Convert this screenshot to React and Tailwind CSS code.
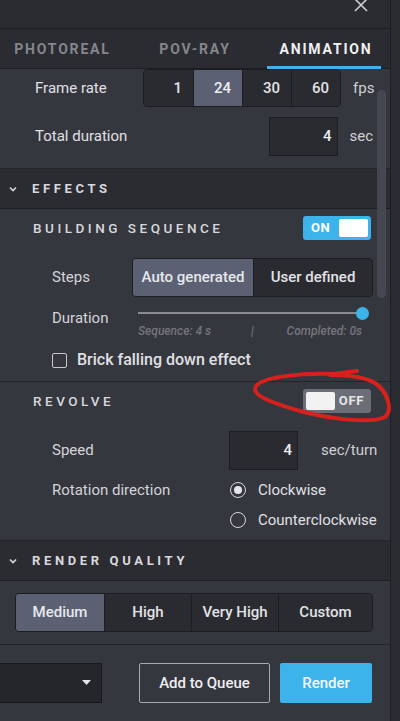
import React, { useState } from "react";

const Segmented = ({ items, active, widths, className }) => (
  <div className={`flex rounded-[4px] border border-[#1c1d22] overflow-hidden ${className}`}>
    {items.map((item, i) => (
      <div
        key={item}
        className={`flex items-center justify-center text-[15px] font-medium ${
          i === active ? "bg-[#5b6073] text-[#e8e8ec]" : "bg-[#2a2b31] text-[#e2e2e6]"
        } ${i > 0 ? "border-l border-[#1c1d22]" : ""}`}
        style={{ width: widths[i] }}
      >
        {item}
      </div>
    ))}
  </div>
);

const Toggle = ({ on }) =>
  on ? (
    <div className="w-[68px] h-[24px] rounded-[3px] bg-[#3db3ec] flex items-center justify-between pl-[8px] pr-[3px]">
      <span className="text-[13px] font-bold text-white tracking-[0.05em]">ON</span>
      <div className="w-[29px] h-[18px] bg-white rounded-[2px]" />
    </div>
  ) : (
    <div className="w-[68px] h-[24px] rounded-[3px] bg-[#6c6e77] flex items-center justify-between pl-[3px] pr-[7px]">
      <div className="w-[29px] h-[18px] bg-[#f2f2f2] rounded-[2px]" />
      <span className="text-[13px] font-bold text-[#e6e6e6] tracking-[0.05em]">OFF</span>
    </div>
  );

const Chevron = () => (
  <svg width="10" height="10" viewBox="0 0 10 10" className="mr-[14px]">
    <path d="M2 3.5 L5 6.5 L8 3.5" stroke="#d8d8dc" strokeWidth="1.6" fill="none" />
  </svg>
);

const App = () => {
  const [tab] = useState(2);
  const tabs = ["PHOTOREAL", "POV-RAY", "ANIMATION"];

  return (
    <div
      className="relative w-[400px] h-[721px] overflow-hidden flex bg-[#2a2c31] text-[#dcdce0]"
      style={{ fontFamily: "Roboto, 'Noto Sans', sans-serif" }}
    >
      <div className="w-[391px] h-full flex flex-col bg-[#35373f] border-r border-[#1d1e22]">
        {/* title bar */}
        <div className="h-[29px] bg-[#2b2c32] border-b border-[#1d1e22] flex items-start justify-end pr-[22px]">
          <svg width="14" height="14" viewBox="0 0 14 14" className="mt-[-2px]">
            <path d="M1 1 L13 13 M13 1 L1 13" stroke="#d0d0d4" strokeWidth="1.6" />
          </svg>
        </div>

        {/* tabs */}
        <div className="h-[40px] bg-[#2b2c32] border-b border-[#1d1e22] flex">
          {tabs.map((t, i) => (
            <div key={t} className="relative flex-1 flex items-center justify-center">
              <span
                className={`text-[14px] font-bold tracking-[0.13em] mt-[2px] ${
                  i === tab ? "text-[#f0f0f2]" : "text-[#85868c]"
                } ${i === 0 ? "ml-[-5px]" : ""} ${i === 2 ? "ml-[2px]" : ""}`}
              >
                {t}
              </span>
              {i === tab && (
                <div className="absolute bottom-[-1px] left-[7px] right-[9px] h-[3px] bg-[#3db3ec]" />
              )}
            </div>
          ))}
        </div>

        {/* frame rate + duration */}
        <div className="h-[100px] border-b border-[#24252a] flex flex-col">
          <div className="flex items-center h-[38px]">
            <span className="ml-[35px] w-[108px] text-[15px] text-[#e0e0e4]">Frame rate</span>
            <div className="flex rounded-[4px] border border-[#1c1d22] overflow-hidden h-[38px]">
              {["1", "24", "30", "60"].map((v, i) => (
                <div
                  key={v}
                  className={`w-[49px] flex items-center justify-end pr-[11px] text-[15px] font-medium ${
                    i === 1 ? "bg-[#5b6073] text-[#eeeef0]" : "bg-[#2a2b31] text-[#e2e2e6]"
                  } ${i > 0 ? "border-l border-[#1c1d22]" : ""}`}
                >
                  {v}
                </div>
              ))}
            </div>
            <span className="ml-[12px] text-[15px] text-[#d0d0d4]">fps</span>
          </div>
          <div className="flex items-center h-[39px] mt-[10px]">
            <span className="ml-[35px] flex-1 text-[15px] text-[#e0e0e4]">Total duration</span>
            <div className="w-[69px] h-[39px] bg-[#2a2b31] border border-[#1c1d22] flex items-center justify-end pr-[6px] text-[15px] font-medium text-[#eeeef0]">
              4
            </div>
            <span className="ml-[11px] mr-[17px] text-[15px] text-[#d0d0d4]">sec</span>
          </div>
        </div>

        {/* effects header */}
        <div className="h-[40px] bg-[#2b2c32] border-b border-[#1d1e22] flex items-center pl-[8px]">
          <Chevron />
          <span className="text-[13px] font-bold tracking-[0.28em] text-[#d8d8dc]">EFFECTS</span>
        </div>

        {/* building sequence */}
        <div className="h-[173px] border-b border-[#24252a] flex flex-col">
          <div className="flex items-center justify-between h-[24px] mt-[7px] pl-[33px] pr-[19px]">
            <span className="text-[13.5px] font-medium tracking-[0.26em] text-[#d8d8dc]">BUILDING SEQUENCE</span>
            <Toggle on />
          </div>
          <div className="flex items-center h-[39px] mt-[18px]">
            <span className="ml-[52px] w-[80px] text-[15px] text-[#d4d4d8]">Steps</span>
            <Segmented
              items={["Auto generated", "User defined"]}
              active={0}
              widths={[120, 119]}
              className="h-[39px]"
            />
          </div>
          <div className="flex items-start mt-[9px]">
            <span className="ml-[52px] w-[86px] text-[15px] text-[#d4d4d8] mt-[1px]">Duration</span>
            <div className="w-[230px] flex flex-col">
              <div className="relative h-[14px] flex items-center">
                <div className="w-[224px] h-[2px] bg-[#8a8b90]" />
                <div className="absolute left-[218px] top-[1px] w-[13px] h-[13px] rounded-full bg-[#3db3ec]" />
              </div>
              <div className="flex items-center text-[12px] font-medium italic text-[#74757c] mt-[2px] pr-[6px]">
                <span className="w-[113px]">Sequence: 4 s</span>
                <span>|</span>
                <span className="ml-auto">Completed: 0s</span>
              </div>
            </div>
          </div>
          <div className="flex items-center mt-[8px] ml-[52px]">
            <div className="w-[15px] h-[15px] border-[1.5px] border-[#c8c8cc] rounded-[2px]" />
            <span className="ml-[10px] text-[16px] font-medium text-[#e0e0e4]">Brick falling down effect</span>
          </div>
        </div>

        {/* revolve */}
        <div className="h-[159px] border-b border-[#24252a] flex flex-col">
          <div className="flex items-center justify-between h-[24px] mt-[7px] pl-[33px] pr-[19px]">
            <span className="text-[13.5px] font-medium tracking-[0.26em] text-[#d8d8dc]">REVOLVE</span>
            <Toggle on={false} />
          </div>
          <div className="flex items-center h-[39px] mt-[18px]">
            <span className="ml-[52px] w-[177px] text-[15px] text-[#d4d4d8]">Speed</span>
            <div className="w-[69px] h-[39px] bg-[#2a2b31] border border-[#1c1d22] flex items-center justify-end pr-[5px] text-[15px] font-medium text-[#eeeef0]">
              4
            </div>
            <span className="ml-[23px] text-[15px] text-[#d0d0d4]">sec/turn</span>
          </div>
          <div className="flex items-center mt-[10px] h-[20px]">
            <span className="ml-[52px] w-[178px] text-[15px] text-[#d4d4d8]">Rotation direction</span>
            <div className="w-[16px] h-[16px] rounded-full border-[1.5px] border-[#d8d8dc] flex items-center justify-center">
              <div className="w-[8px] h-[8px] rounded-full bg-[#e6e6ea]" />
            </div>
            <span className="ml-[12px] text-[15px] text-[#e0e0e4]">Clockwise</span>
          </div>
          <div className="flex items-center mt-[10px] h-[20px]">
            <div className="ml-[230px] w-[16px] h-[16px] rounded-full border-[1.5px] border-[#d8d8dc]" />
            <span className="ml-[12px] text-[15px] text-[#e0e0e4]">Counterclockwise</span>
          </div>
        </div>

        {/* render quality header */}
        <div className="h-[40px] bg-[#2b2c32] border-b border-[#1d1e22] flex items-center pl-[8px]">
          <Chevron />
          <span className="text-[13px] font-bold tracking-[0.28em] text-[#d8d8dc]">RENDER QUALITY</span>
        </div>

        <div className="h-[64px] border-b border-[#24252a] flex items-center pl-[15px]">
          <Segmented
            items={["Medium", "High", "Very High", "Custom"]}
            active={0}
            widths={[88, 87, 87, 94]}
            className="h-[39px]"
          />
        </div>

        {/* footer */}
        <div className="flex items-center mt-[18px]">
          <div className="w-[102px] h-[40px] bg-[#25262b] border border-[#18191c] border-l-0 flex items-center justify-end pr-[10px]">
            <svg width="9" height="6" viewBox="0 0 9 6">
              <path d="M0 0 L9 0 L4.5 5 Z" fill="#e6e6ea" />
            </svg>
          </div>
          <div className="ml-[37px] w-[131px] h-[40px] border border-[#a8a9ae] rounded-[2px] flex items-center justify-center text-[15px] font-medium text-[#eeeef0]">
            Add to Queue
          </div>
          <div className="ml-[10px] w-[92px] h-[40px] rounded-[2px] bg-[#3db3ec] flex items-center justify-center text-[15px] font-medium text-[#f4f8fb]">
            Render
          </div>
        </div>
      </div>

      {/* scrollbar */}
      <div className="absolute left-[377px] top-[90px] w-[9px] h-[208px] rounded-full bg-[#464851]" />

      {/* red annotation */}
      <svg className="absolute left-[240px] top-[360px]" width="160" height="80" viewBox="0 0 160 80">
        <path
          d="M117 11 L92 14 C60 13, 25 17, 17 25 C10 33, 22 40, 60 51 C90 59, 130 64, 145 57 C153 50, 148 32, 135 23 C125 17, 105 15, 90 15"
          stroke="#d8201c"
          strokeWidth="4"
          fill="none"
          strokeLinecap="round"
          strokeLinejoin="round"
        />
      </svg>
    </div>
  );
};

export default App;
